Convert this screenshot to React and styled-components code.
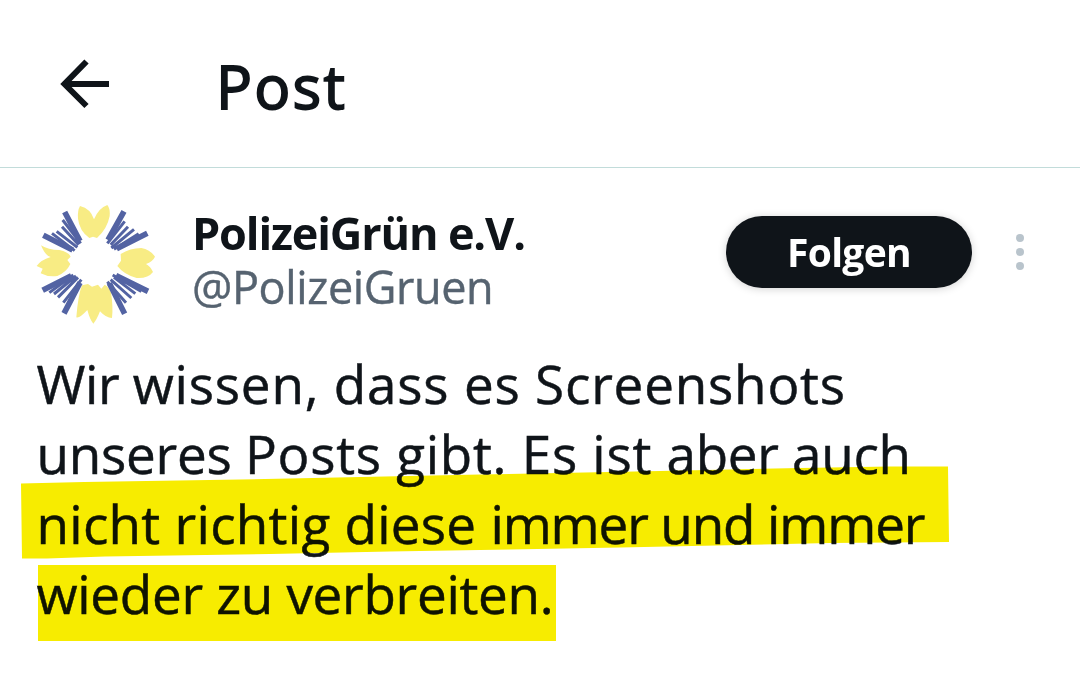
import React from 'react';
import styled, { createGlobalStyle } from 'styled-components';

//<---Styling--->
const GlobalStyle = createGlobalStyle`
    body {
        margin: 0;
        background-color: #ffffff;
        color: #0f1419;
        font-family: 'Open Sans', 'Noto Sans', sans-serif;
    }
`;
const Page = styled.div`
    width: 1080px;
    height: 698px;
    overflow: hidden;
    background-color: #ffffff;
`;
const Header = styled.header`
    box-sizing: border-box;
    height: 168px;
    display: flex;
    align-items: flex-start;
    padding: 46px 0 0 60px;
    border-bottom: 1px solid #c2dcda;
`;
const BackIcon = styled.svg`
    width: 50px;
    height: 50px;
    margin-top: 13px;
`;
const Title = styled.h1`
    margin: 0 0 0 106px;
    font-size: 60px;
    line-height: 80px;
    font-weight: 500;
    letter-spacing: 2.2px;
    -webkit-text-stroke: 1.8px #0f1419;
`;
const Author = styled.section`
    height: 181px;
    display: flex;
    align-items: flex-start;
`;
const AvatarIcon = styled.svg`
    width: 122px;
    height: 122px;
    margin: 35px 0 0 35px;
`;
const Names = styled.div`
    width: 534px;
    margin: 38px 0 0 35px;
    white-space: nowrap;
`;
const Name = styled.div`
    font-size: 45px;
    line-height: 54px;
    font-weight: 700;
    letter-spacing: -1.15px;
`;
const Handle = styled.div`
    font-size: 45px;
    line-height: 54px;
    color: #566370;
    letter-spacing: -0.4px;
    -webkit-text-stroke: 0.4px #566370;
`;
const FollowButton = styled.button`
    width: 246px;
    height: 72px;
    margin: 48px 0 0;
    padding: 0 0 1px;
    border: none;
    border-radius: 36px;
    background-color: #0f1419;
    color: #ffffff;
    font-family: inherit;
    font-size: 39px;
    line-height: 54px;
    font-weight: 700;
    letter-spacing: -0.7px;
    box-shadow: 0 1px 8px rgba(0, 0, 0, 0.18);
`;
const MoreMenu = styled.div`
    display: flex;
    flex-direction: column;
    gap: 6px;
    margin: 66px 0 0 44px;
`;
const Dot = styled.span`
    width: 8px;
    height: 8px;
    border-radius: 50%;
    background-color: #b9c4cc;
`;
const Content = styled.p`
    position: relative;
    margin: 0;
    padding-left: 36.5px;
    font-size: 53px;
    line-height: 70px;
    white-space: nowrap;
    -webkit-text-stroke: 0.5px #0f1419;
`;
const Line = styled.span`
    display: block;
`;
const Words = styled.span`
    letter-spacing: ${({ $spacing }) => $spacing}px;
`;
// marker strokes lie over the text like a real highlighter
const Marker = styled.svg`
    position: absolute;
    top: -1px;
    left: 0;
    width: 1080px;
    height: 350px;
    mix-blend-mode: multiply;
    pointer-events: none;
`;
//<---Styling ending--->

const lines = [
    [
        { text: 'Wir ', spacing: -0.4 },
        { text: 'wissen, dass es Screenshots', spacing: 0.8 },
    ],
    [
        { text: 'unseres ', spacing: -0.25 },
        { text: 'Posts gibt. Es ist ', spacing: 0.72 },
        { text: 'aber auch', spacing: -0.3 },
    ],
    [
        { text: 'nicht richtig diese ', spacing: 0.27 },
        { text: 'immer und immer', spacing: -1.13 },
    ],
    [
        { text: 'wieder zu verbreiten.', spacing: -0.3 },
    ],
];

function Avatar() {
    return (
        <AvatarIcon viewBox="45 39 366 366">
            <g fill="#f8ec84">
                <path d="M180 48Q172 62 174 86Q178 122 208 144L219 140L231 144Q262 116 269 78Q271 56 262 45Q236 54 222 88Q212 56 180 48Z" />
                <path d="M302 192Q330 174 364 174Q390 178 405 200Q398 215 378 222Q392 230 399 246Q384 266 350 264Q312 254 292 228L303 212Z" />
                <path d="M186 286Q174 316 169 382Q178 386 202 360Q210 390 220 401Q230 390 240 364Q258 384 276 384Q280 350 273 308Q266 290 254 284L244 296L234 284L216 290L204 282Z" />
                <path d="M63 166Q76 198 92 201Q62 210 50 228L68 236L62 250Q84 262 112 258Q140 246 151 222L142 210L152 200Q146 186 118 180Q84 180 63 166Z" />
            </g>
            <g stroke="#5363a3" fill="none">
                <g strokeWidth="17">
                    <path d="M134 66L180 153M70 136L158 180M312 64L264 150M382 130L290 176M68 301L154 257M132 370L180 278M384 304L288 257M314 371L268 280" />
                </g>
                <g strokeWidth="9">
                    <path d="M128 90L182 160M126 110L176 164M110 124L172 172M96 130L164 182" />
                    <path d="M314 94L262 160M324 110L272 164M342 118L274 174M356 131L282 178" />
                    <path d="M88 308L160 255M102 312L168 258M114 322L174 262M130 338L184 269" />
                    <path d="M364 304L278 255M346 311L282 262M334 324L272 269M318 338L262 275" />
                </g>
            </g>
        </AvatarIcon>
    );
}

export default function App() {
    return (
        <Page>
            <GlobalStyle />
            <Header>
                <BackIcon viewBox="0 0 50 50" fill="none" stroke="#0f1419">
                    <path d="M26.5 2.5L4.500 25L26.500 47M4 25H49" strokeWidth="6" />
                </BackIcon>
                <Title>Post</Title>
            </Header>
            <Author>
                <Avatar />
                <Names>
                    <Name>PolizeiGrün e.V.</Name>
                    <Handle>@PolizeiGruen</Handle>
                </Names>
                <FollowButton>Folgen</FollowButton>
                <MoreMenu>
                    <Dot />
                    <Dot />
                    <Dot />
                </MoreMenu>
            </Author>
            <Content>
                {lines.map((line, index) => (
                    <Line key={index}>
                        {line.map(part => (
                            <Words key={part.text} $spacing={part.spacing}>{part.text}</Words>
                        ))}
                    </Line>
                ))}
                <Marker viewBox="0 0 1080 350" fill="#f7ec00">
                    <path d="M21 135.500L84 134L265 131L480 126.500L660 123L800 120L890 118.500L948 118.500L949 194L830 195L740 197L620 199.500L510 201.500L390 203.500L270 206L105 208.500L47 210.500L22 210.500Z" />
                    <path d="M38 217H556V293H38Z" />
                </Marker>
            </Content>
        </Page>
    );
}
